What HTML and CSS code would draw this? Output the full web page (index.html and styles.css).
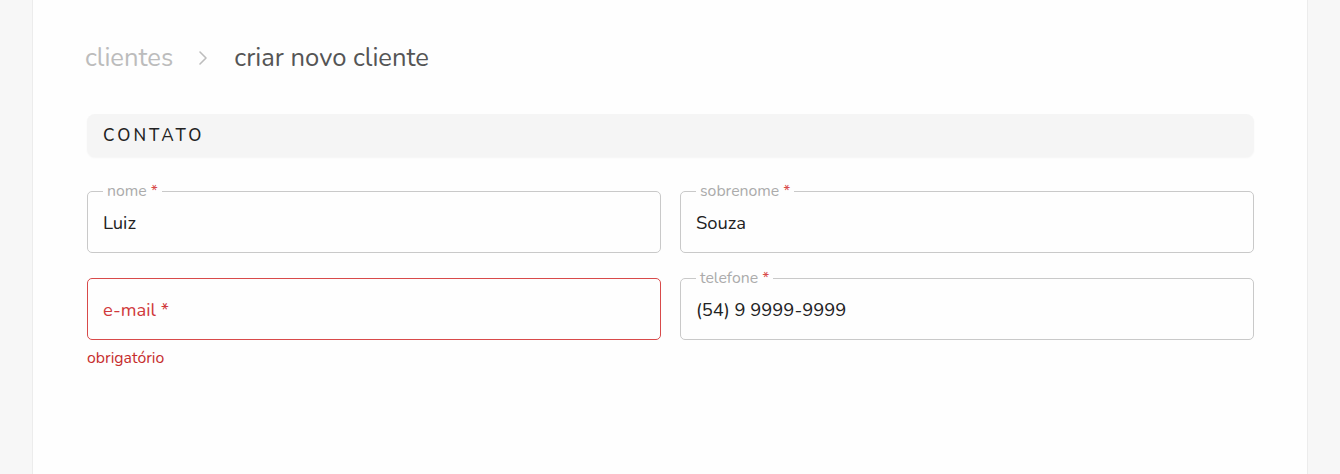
FILE: index.html
```html
<!DOCTYPE html>
<html lang="pt-BR">
<head>
<meta charset="utf-8">
<title>Criar novo cliente</title>
<link rel="stylesheet" href="styles.css">
</head>
<body>
<main class="card">
  <nav class="crumbs">
    <span class="crumb-link">clientes</span>
    <svg class="chev" width="10" height="16" viewBox="0 0 10 16"><path d="M2 2 L8 8 L2 14" fill="none" stroke="#bdbdbd" stroke-width="1.6" stroke-linecap="round" stroke-linejoin="round"/></svg>
    <span class="crumb-current">criar novo cliente</span>
  </nav>

  <section class="section">
    <h2 class="section-title">CONTATO</h2>
    <div class="grid">
      <div class="cell">
        <div class="field">
          <span class="label">nome <b class="req">*</b></span>
          <span class="value">Luiz</span>
        </div>
      </div>
      <div class="cell">
        <div class="field">
          <span class="label">sobrenome <b class="req">*</b></span>
          <span class="value">Souza</span>
        </div>
      </div>
      <div class="cell">
        <div class="field field-error">
          <span class="placeholder">e-mail *</span>
        </div>
        <div class="error-text">obrigatório</div>
      </div>
      <div class="cell">
        <div class="field">
          <span class="label">telefone <b class="req">*</b></span>
          <span class="value">(54) 9 9999-9999</span>
        </div>
      </div>
    </div>
  </section>
</main>
</body>
</html>
```
FILE: styles.css
```css
html, body {
  margin: 0;
  padding: 0;
  height: 100%;
}
body {
  background: #f7f7f7;
  font-family: "Nunito", "Lato", "Open Sans", sans-serif;
  overflow: hidden;
}
.card {
  margin: 0 32px;
  background: #fefefe;
  border-left: 1px solid #ececec;
  border-right: 1px solid #ececec;
  min-height: 100%;
  box-sizing: border-box;
  padding: 42px 53px 0 54px;
}
.crumbs {
  display: flex;
  align-items: center;
  height: 32px;
  font-size: 25.6px;
  line-height: 32px;
}
.crumb-link {
  color: #bcbcbc;
  margin-left: -2px;
}
.chev {
  margin: 0 26px 0 25px;
}
.crumb-current {
  color: #555;
}
.section {
  margin-top: 40px;
}
.section-title {
  margin: 0;
  height: 43px;
  box-sizing: border-box;
  padding: 0 16px;
  display: flex;
  align-items: center;
  background: #f5f5f5;
  border-radius: 8px;
  box-shadow: 0 1px 2px rgba(0,0,0,0.04);
  font-size: 17px;
  font-weight: 500;
  letter-spacing: 3.1px;
  color: #222;
}
.grid {
  margin-top: 34px;
  display: grid;
  grid-template-columns: 1fr 1fr;
  column-gap: 19px;
  row-gap: 25px;
}
.cell {
  display: flex;
  flex-direction: column;
}
.field {
  position: relative;
  height: 62px;
  box-sizing: border-box;
  border: 1px solid #c9c9c9;
  border-radius: 5px;
  padding: 0 15px;
  display: flex;
  align-items: center;
}
.label {
  position: absolute;
  top: -11px;
  left: 15px;
  padding: 0 4px;
  background: #fefefe;
  font-size: 15.8px;
  line-height: 20px;
  color: #ababab;
}
.req {
  color: #d84a4a;
  font-weight: 400;
}
.value {
  font-size: 18.4px;
  color: #222;
}
.field-error {
  border-color: #d84a4a;
}
.placeholder {
  font-size: 18.4px;
  color: #d0393b;
}
.error-text {
  margin-top: 8px;
  font-size: 15.8px;
  line-height: 20px;
  color: #c62d2d;
}
```
